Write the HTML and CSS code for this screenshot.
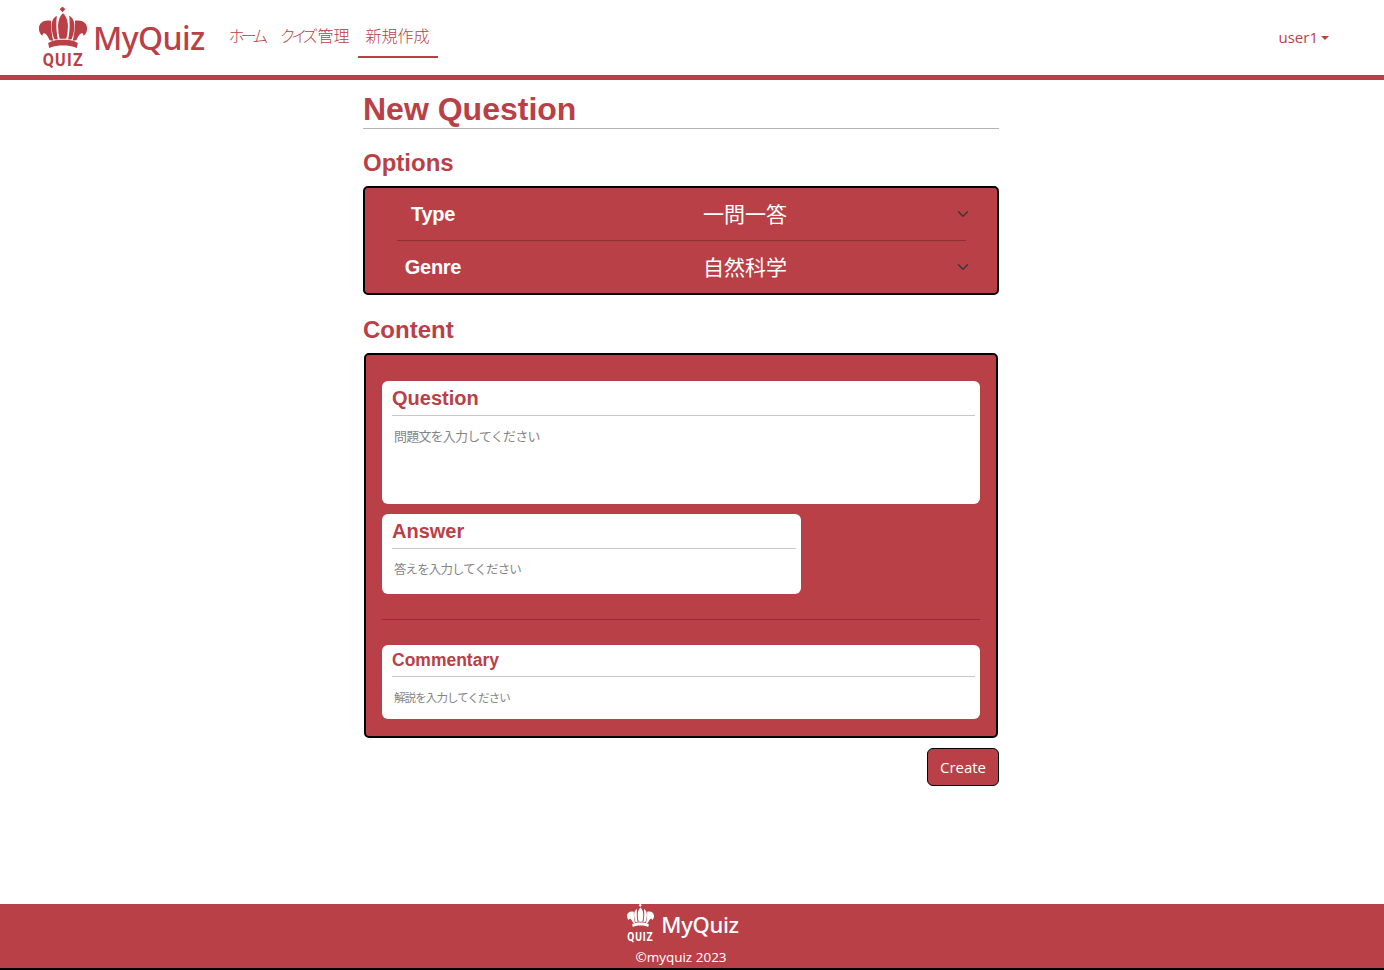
FILE: index.html
```html
<!DOCTYPE html>
<html lang="ja">
<head>
    <meta charset="utf-8">
    <title>MyQuiz</title>
    <link rel="stylesheet" href="styles.css">
</head>
<body>
    <svg class="defs" width="0" height="0">
        <symbol id="crown" viewBox="0 0 48 40">
            <path d="M23.500-.5l2.800 2.800-2.800 2.800-2.800-2.800z"/>
            <path d="M24 6c-3.500 3-4.800 8-4.800 13 0 4 .5 8 1.500 12h6.600c1-4 1.500-8 1.500-12 0-5-1.300-10-4.800-13z"/>
            <g id="crown-side">
                <path d="M18 8.500c-4.500 2-5.500 7.500-5 12.500.4 4 1.500 8 2.500 10.500l3.500.2c-1-5-1.500-10-1.500-14 0-3.200.2-6.700.5-9.200z"/>
                <path d="M12.300 13.500c-6.500-1.500-11.800 1.500-11.800 7.500 0 3.500 1.500 6 3.500 7 0-1.500.5-2.500 1.500-2.500 2 0 4 3.500 5.500 7l3.500.5c-1.500-5.500-2.200-13-2.200-19.500z"/>
            </g>
            <use href="#crown-side" transform="matrix(-1 0 0 1 48 0)"/>
            <path d="M9.500 35c4.500-2.500 9.500-3 14.500-3s10 .5 14.500 3l-1 5c-4.500-2-9-2.500-13.500-2.500s-9 .5-13.500 2.500z"/>
        </symbol>
    </svg>

    <header class="navbar">
        <a class="brand" href="#">
            <span class="logo">
                <svg class="crown"><use href="#crown"/></svg>
                <span class="logo-word">QUIZ</span>
            </span>
            <span class="brand-name">MyQuiz</span>
        </a>
        <nav class="nav-links">
            <a class="nav-link nav-home" href="#">ホーム</a>
            <a class="nav-link" href="#"><span class="kana">クイズ</span>管理</a>
            <a class="nav-link active" href="#">新規作成</a>
        </nav>
        <a class="user-menu" href="#">user1<span class="caret"></span></a>
    </header>

    <main class="page">
        <h1 class="page-title">New Question</h1>

        <h2 class="section-title">Options</h2>
        <section class="panel options">
            <div class="option-row">
                <label class="option-label" for="type">Type</label>
                <select id="type" class="option-select">
                    <option>一問一答</option>
                </select>
            </div>
            <div class="option-line"></div>
            <div class="option-row">
                <label class="option-label" for="genre">Genre</label>
                <select id="genre" class="option-select">
                    <option>自然科学</option>
                </select>
            </div>
        </section>

        <h2 class="section-title content-title">Content</h2>
        <section class="panel content">
            <div class="field">
                <label class="field-label" for="question">Question</label>
                <textarea id="question" class="field-input input-question" placeholder="問題文を入力してください"></textarea>
            </div>
            <div class="field field-answer">
                <label class="field-label" for="answer">Answer</label>
                <textarea id="answer" class="field-input input-answer" placeholder="答えを入力してください"></textarea>
            </div>
            <hr class="content-line">
            <div class="field field-commentary">
                <label class="field-label" for="commentary">Commentary</label>
                <textarea id="commentary" class="field-input input-commentary" placeholder="解説を入力してください"></textarea>
            </div>
        </section>

        <div class="actions">
            <button class="btn-create" type="button">Create</button>
        </div>
    </main>

    <footer class="footer">
        <div class="footer-brand">
            <span class="logo logo-small">
                <svg class="crown"><use href="#crown"/></svg>
                <span class="logo-word">QUIZ</span>
            </span>
            <span class="brand-name">MyQuiz</span>
        </div>
        <div class="copyright">©myquiz 2023</div>
    </footer>
</body>
</html>
```

FILE: styles.css
```css
* {
    box-sizing: border-box;
}

html,
body {
    height: 100%;
}

body {
    margin: 0;
    display: flex;
    flex-direction: column;
    min-height: 970px;
    font-family: "Open Sans", "Noto Sans CJK JP", sans-serif;
    font-feature-settings: "palt";
    color: #b94047;
    background-color: #ffffff;
}

a {
    color: inherit;
    text-decoration: none;
}

.defs {
    display: block;
    height: 0;
}

/* navbar */
.navbar {
    display: flex;
    align-items: flex-start;
    height: 80px;
    padding: 7px 55px 0 38px;
    border-bottom: 5px solid #b94047;
}

.brand {
    display: flex;
    align-items: flex-start;
}

.logo {
    display: flex;
    flex-direction: column;
    align-items: center;
    width: 50px;
    fill: currentColor;
}

.crown {
    display: block;
    width: 50px;
    height: 41px;
}

.logo-word {
    margin-top: 2px;
    font-family: "Roboto", sans-serif;
    font-size: 19px;
    font-weight: 700;
    line-height: 19px;
    letter-spacing: 1.5px;
    transform: scaleX(0.85);
}

.brand-name {
    margin: 9px 0 0 5px;
    font-family: "Noto Sans", sans-serif;
    font-size: 32px;
    font-weight: 500;
    line-height: 44px;
    letter-spacing: -0.6px;
}

.nav-links {
    display: flex;
    margin: 10px 0 0 16px;
}

.nav-link {
    height: 41px;
    padding: 7px 8px 0;
    font-size: 16px;
    font-weight: 300;
    line-height: 24px;
}

.nav-link.active {
    border-bottom: 2px solid #b94047;
}

.nav-home {
    letter-spacing: -3.4px;
}

.kana {
    letter-spacing: -2.8px;
    margin-right: 2.800px;
}

.user-menu {
    margin: 18px 0 0 auto;
    font-size: 15px;
    line-height: 24px;
}

.caret {
    display: inline-block;
    margin-left: 3px;
    vertical-align: 3px;
    border-top: 4px solid #b94047;
    border-left: 4px solid transparent;
    border-right: 4px solid transparent;
}

/* main */
.page {
    flex: 1;
    width: 658px;
    margin: 0 auto;
    padding-right: 22px;
}

.page-title {
    margin: 10px 0 0;
    border-bottom: 1px solid #b3b3b3;
    font-family: "Liberation Sans", sans-serif;
    font-size: 32px;
    font-weight: 700;
    line-height: 38px;
}

.section-title {
    margin: 19px 0 9px;
    font-family: "Liberation Sans", sans-serif;
    font-size: 24px;
    font-weight: 700;
    line-height: 29px;
}

.content-title {
    margin-top: 20px;
}

.panel {
    border: 2px solid #000000;
    border-radius: 5px;
    background-color: #b94047;
}

.options {
    height: 109px;
}

.option-row {
    display: grid;
    grid-template-columns: 72px 1fr;
    column-gap: 62px;
    align-items: center;
    height: 52px;
    padding: 0 14px 0 32px;
}

.option-label {
    font-family: "Liberation Sans", sans-serif;
    font-size: 20px;
    font-weight: 700;
    letter-spacing: -0.3px;
    text-align: center;
    color: #ffffff;
}

.option-select {
    appearance: none;
    width: 100%;
    height: 40px;
    padding: 0 36px 0 12px;
    border: none;
    outline: none;
    font-family: inherit;
    font-size: 21px;
    text-align: center;
    text-align-last: center;
    color: #ffffff;
    background: transparent url("data:image/svg+xml,%3csvg xmlns='http://www.w3.org/2000/svg' viewBox='0 0 16 16'%3e%3cpath fill='none' stroke='%23343a40' stroke-linecap='round' stroke-linejoin='round' stroke-width='2' d='m2 5 6 6 6-6'/%3e%3c/svg%3e") no-repeat right 14px center / 12px 12px;
}

.option-line {
    height: 1px;
    margin: 0 31px 0 32px;
    background-color: #8a3037;
}

.content {
    height: 385px;
    margin: 0 1px;
    padding: 26px 16px 0;
}

.field {
    display: flex;
    flex-direction: column;
    border-radius: 6px;
    background-color: #ffffff;
    padding: 0 5px 0 10px;
}

.field-answer {
    width: 419px;
    margin-top: 10px;
}

.field-commentary {
    margin-top: 25px;
}

.field-label {
    height: 35px;
    border-bottom: 1px solid #c8c8c8;
    font-family: "Liberation Sans", sans-serif;
    font-size: 20px;
    font-weight: 700;
    line-height: 34px;
}

.field-commentary .field-label {
    height: 32px;
    font-size: 17.500px;
    line-height: 30px;
}

.field-input {
    display: block;
    width: 100%;
    padding: 10px 2px 0;
    border: none;
    outline: none;
    resize: none;
    font-family: inherit;
    font-size: 13px;
    line-height: 20px;
    letter-spacing: -0.8px;
    color: #333333;
    background: transparent;
}

.field-input::placeholder {
    color: #858585;
}

.input-question {
    height: 88px;
}

.input-answer {
    height: 45px;
    padding-top: 11px;
    font-size: 12.500px;
    letter-spacing: -0.9px;
}

.input-commentary {
    height: 42px;
    padding-top: 11px;
    font-size: 11.500px;
    letter-spacing: -0.9px;
}

.content-line {
    height: 1px;
    margin: 25px 0 0;
    border: none;
    background-color: #8a3037;
}

.actions {
    display: flex;
    justify-content: flex-end;
    margin-top: 10px;
}

.btn-create {
    width: 72px;
    height: 38px;
    border: 1px solid #000000;
    border-radius: 6px;
    font-family: inherit;
    font-size: 15px;
    color: #ffffff;
    background-color: #b94047;
}

/* footer */
.footer {
    height: 66px;
    padding-right: 22px;
    border-bottom: 2px solid #000000;
    color: #ffffff;
    background-color: #b94047;
}

.footer-brand {
    display: flex;
    justify-content: center;
    height: 39px;
}

.logo-small {
    width: 33px;
    margin: 0 1px 0 1px;
}

.logo-small .crown {
    width: 33px;
    height: 27px;
}

.logo-small .logo-word {
    margin-top: 4px;
    font-size: 12px;
    line-height: 12px;
    letter-spacing: 1px;
}

.footer-brand .brand-name {
    margin: 5px 0 0 3px;
    font-size: 22px;
    line-height: 30px;
    letter-spacing: -0.3px;
}

.copyright {
    margin-top: 4px;
    font-size: 13.500px;
    line-height: 20px;
    text-align: center;
}
```
